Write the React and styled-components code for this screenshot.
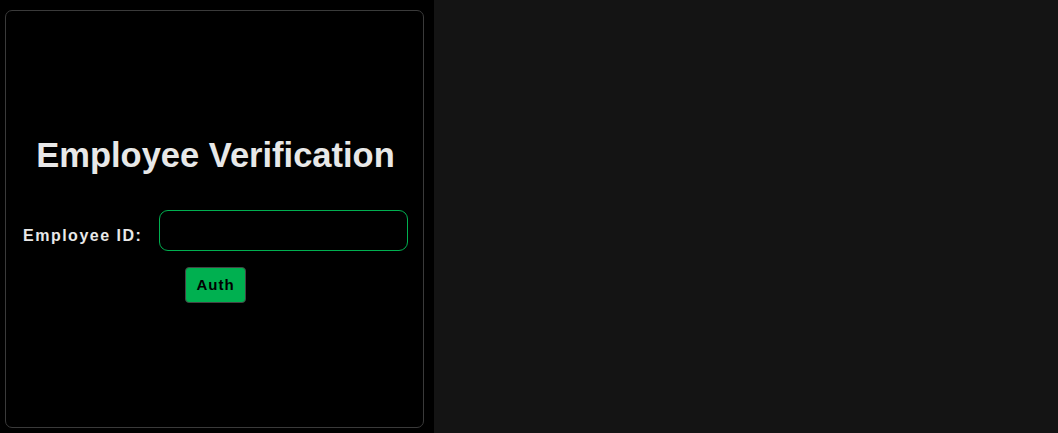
import React, { useState } from 'react';
import styled, { createGlobalStyle } from 'styled-components';

const GlobalStyle = createGlobalStyle`
  html, body {
    margin: 0;
    padding: 0;
    height: 100%;
    background: #141414;
    font-family: "Liberation Sans", Arial, sans-serif;
  }
  #root {
    height: 100%;
  }
`;

const Page = styled.div`
  display: flex;
  height: 433px;
`;

const LeftPane = styled.div`
  width: 434px;
  background: #000;
  padding: 10px 10px 5px 5px;
  box-sizing: border-box;
  display: flex;
`;

const RightPane = styled.div`
  flex: 1;
  background: #141414;
`;

const Card = styled.div`
  flex: 1;
  border: 1px solid #3a3a3a;
  border-radius: 7px;
  display: flex;
  flex-direction: column;
  justify-content: center;
  align-items: center;
  padding: 0 15px 0 17px;
`;

const Title = styled.h1`
  margin: 0 0 36px;
  font-size: 34.5px;
  font-weight: bold;
  color: #e8e8e8;
  line-height: 38px;
`;

const Row = styled.div`
  display: flex;
  align-items: center;
  align-self: stretch;
  margin-bottom: 16px;
`;

const Label = styled.label`
  color: #e8e8e8;
  font-size: 16px;
  font-weight: bold;
  letter-spacing: 1.5px;
  margin: 12px 17px 0 0;
  white-space: nowrap;
`;

const Input = styled.input`
  flex: 1;
  height: 41px;
  box-sizing: border-box;
  background: #000;
  border: 1px solid #00b050;
  border-radius: 9px;
  color: #e8e8e8;
  font-size: 15px;
  padding: 0 10px;
  outline: none;
  min-width: 0;
`;

const AuthButton = styled.button`
  width: 61px;
  height: 36px;
  background: #00b050;
  border: 1px solid #444;
  border-radius: 4px;
  color: #000;
  font-family: "Liberation Sans", Arial, sans-serif;
  font-size: 15px;
  font-weight: bold;
  letter-spacing: 1px;
  cursor: pointer;
  padding: 0;
`;

export default function App() {
  const [employeeId, setEmployeeId] = useState('');

  return (
    <>
      <GlobalStyle />
      <Page>
        <LeftPane>
          <Card>
            <Title>Employee Verification</Title>
            <Row>
              <Label htmlFor="employee-id">Employee ID:</Label>
              <Input
                id="employee-id"
                value={employeeId}
                onChange={e => setEmployeeId(e.target.value)}
              />
            </Row>
            <AuthButton>Auth</AuthButton>
          </Card>
        </LeftPane>
        <RightPane />
      </Page>
    </>
  );
}
